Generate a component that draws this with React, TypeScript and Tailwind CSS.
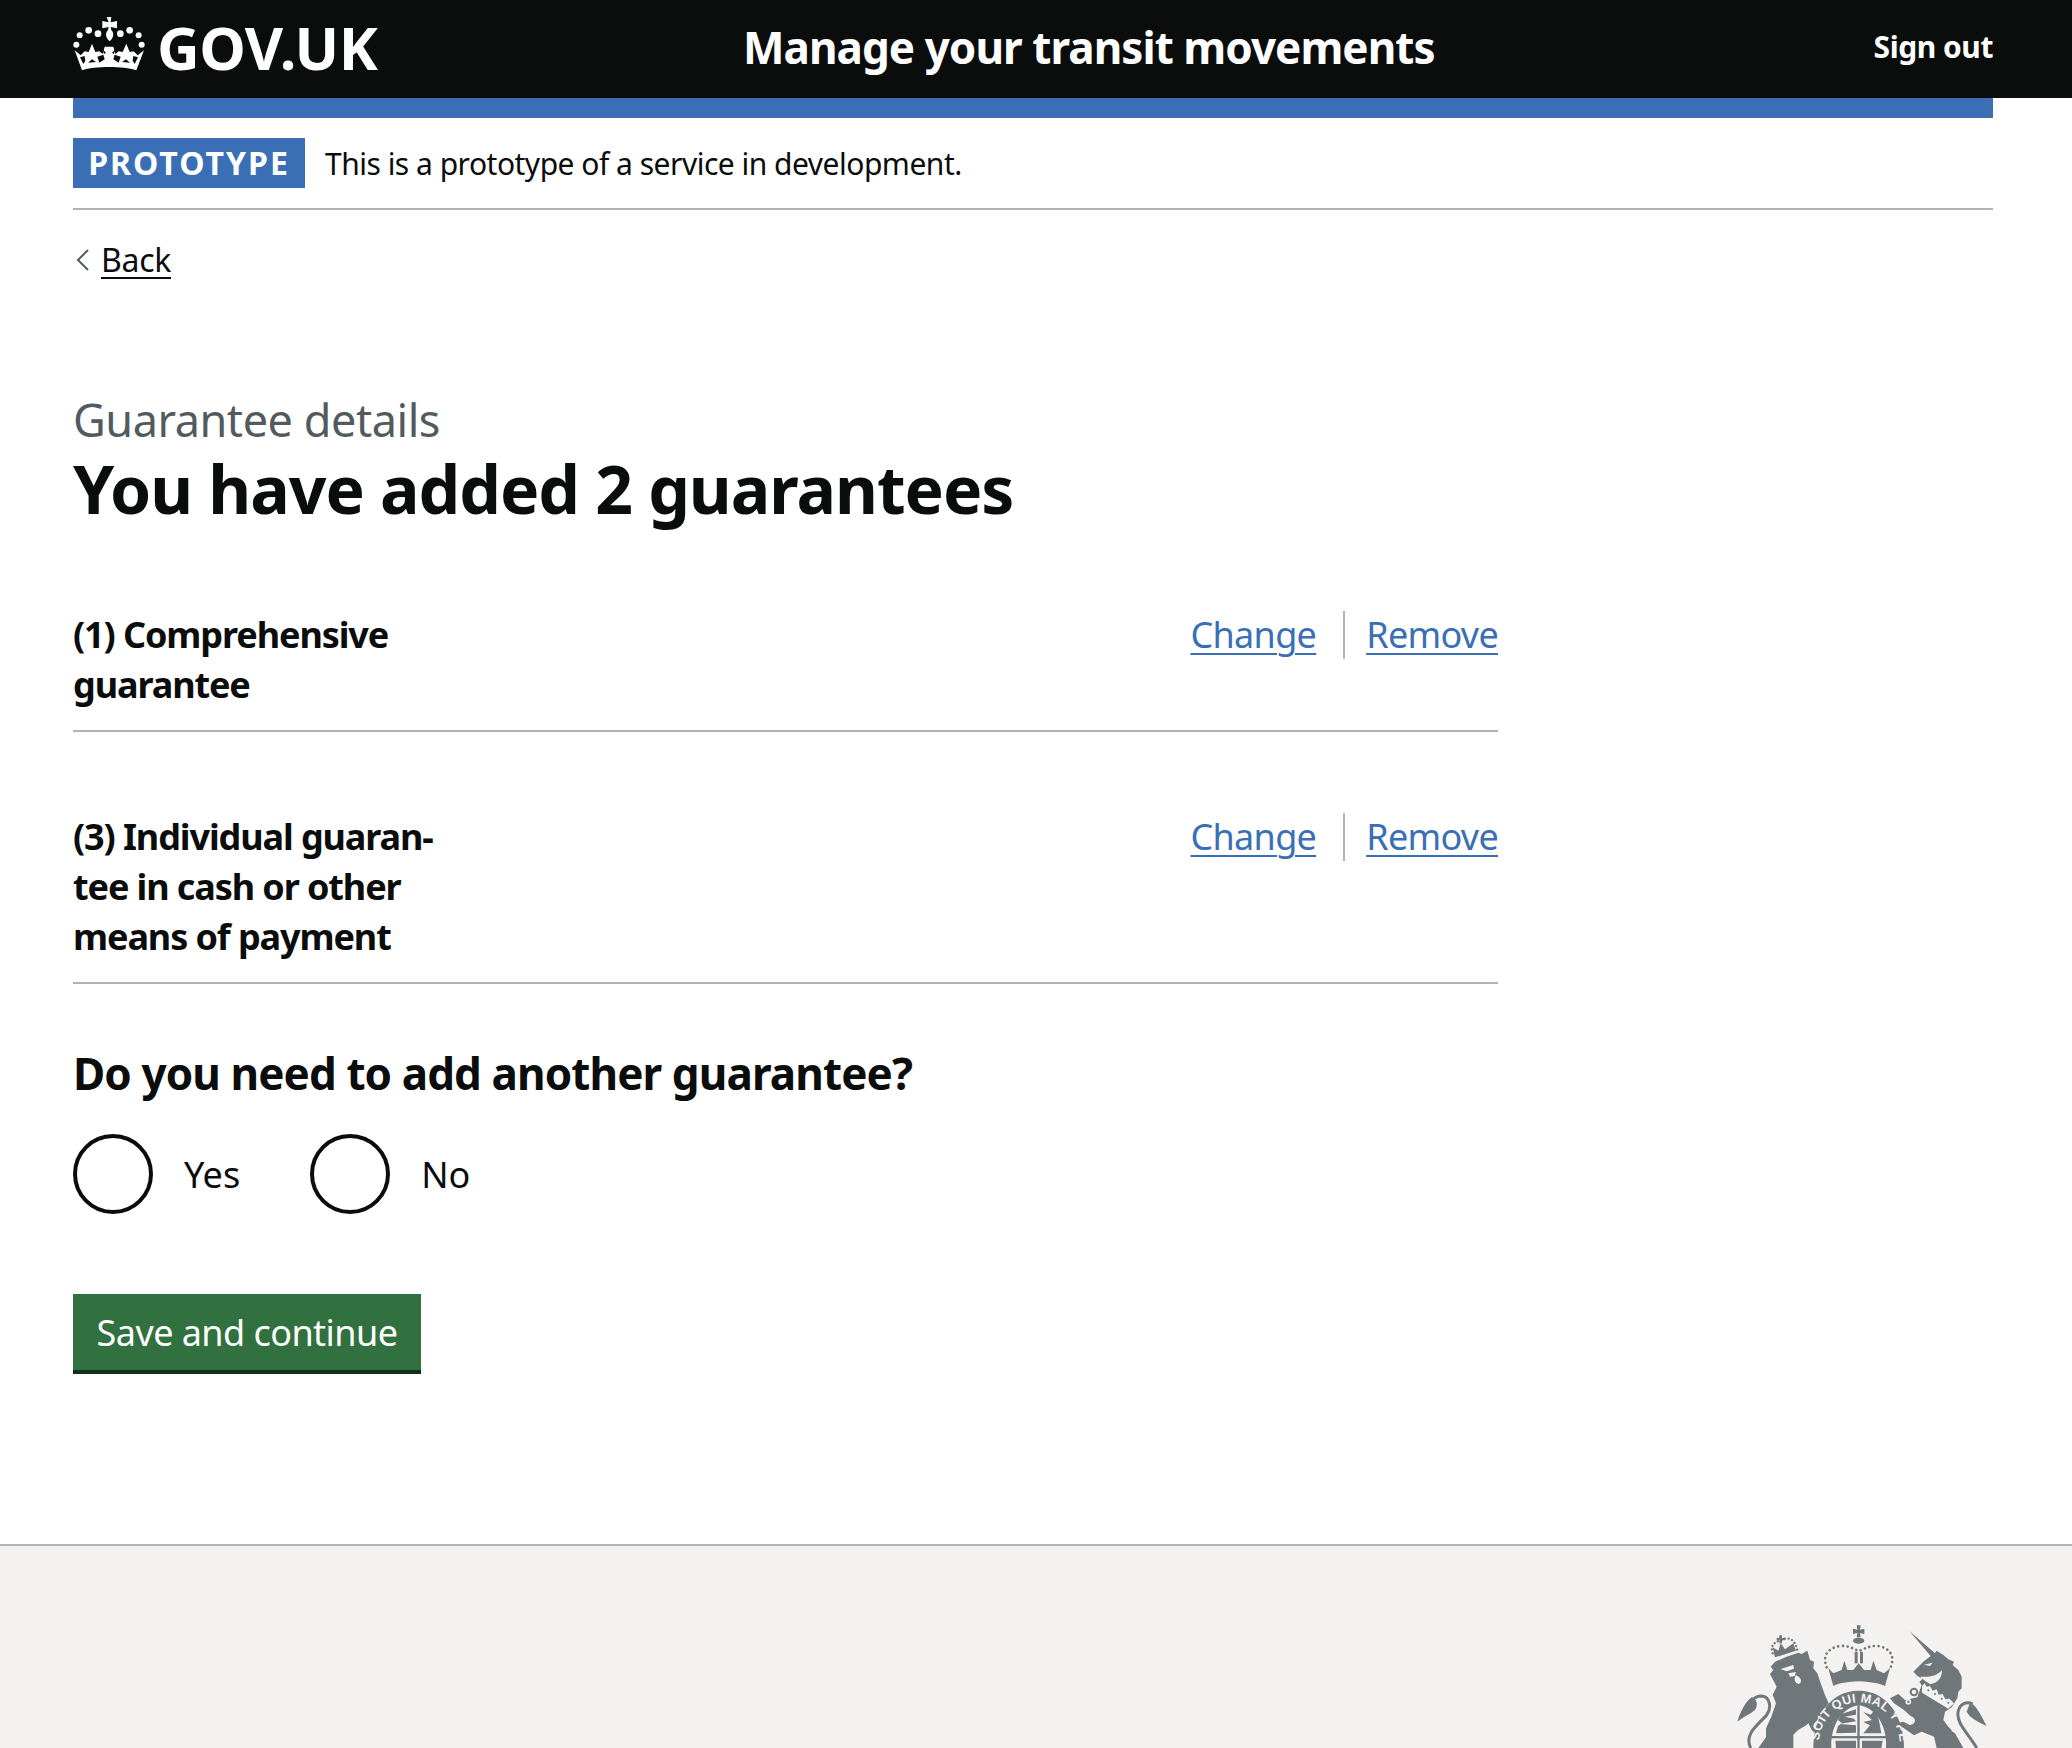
import React from 'react';

const CrownLogo: React.FC = () => (
  <svg viewBox="0 0 252 186" className="w-[84px] h-[62px] shrink-0 -ml-[5px] -mt-[8px]">
    <g fill="#ffffff">
      <path d="M116 15h14l-2 16 19-4v22l-19-4 2 10c10 8 6 24-5 33-11-9-15-25-5-33l2-10-19 4V27l19 4z" />
      <circle cx="35" cy="70" r="9" />
      <circle cx="62" cy="55" r="10" />
      <circle cx="90" cy="65" r="10" />
      <circle cx="157" cy="65" r="10" />
      <circle cx="185" cy="55" r="10" />
      <circle cx="212" cy="70" r="9" />
      <circle cx="25" cy="98" r="9" />
      <circle cx="221" cy="98" r="9" />
      <path d="M20 115 L38 130 L50 118 L62 120 L72 95 L82 120 L94 118 L104 126 L110 104 H136 L142 126 L152 118 L164 120 L175 95 L185 120 L197 118 L209 130 L228 115 L205 175 C165 162 80 162 42 175 Z" />
    </g>
    <g fill="#0b0c0c">
      <path d="M36 136 L50 132 L52 146 L46 156 Z" />
      <path d="M88 134 L106 128 L110 142 L94 152 Z" />
      <path d="M158 134 L140 128 L136 142 L152 152 Z" />
      <path d="M210 136 L196 132 L194 146 L200 156 Z" />
      <path d="M60 152 L84 150 L72 142 Z" />
      <path d="M162 150 L186 152 L174 142 Z" />
      <path d="M104 112 L114 122 L108 126 Z" />
      <path d="M142 112 L132 122 L138 126 Z" />
    </g>
  </svg>
);

const Crest: React.FC = () => (
  <svg viewBox="0 0 810 384" className="w-[270px] h-32 shrink-0">
    {/* lion */}
    <g fill="#6f777b">
      <path d="M122 140 L135 125 L170 110 L205 98 L215 102 L232 92 L240 120 L252 125 L250 145 L262 160 L272 190 L285 225 L296 250 L280 270 L262 300 L250 320 L268 345 L270 384 L85 384 L108 352 L108 325 L124 290 L138 250 L128 225 L140 200 L120 162 L130 150 Z" />
      <path d="M65 232 C45 245 30 280 22 305 C40 290 58 285 75 270 C86 255 80 236 65 232 Z" />
      <path d="M135 112 L128 82 L145 92 L152 70 L165 88 L190 70 L198 92 Z" />
      <path d="M148 46h8v8l8-1v8l-8-1v10h-8V60l-8 1v-8l8 1z" />
    </g>
    <g fill="none" stroke="#6f777b" strokeWidth="9">
      <path d="M62 384 C40 340 90 310 110 285 C126 264 120 230 95 228 C85 228 75 232 70 238" />
    </g>
    <g fill="none" stroke="#6f777b" strokeWidth="7" strokeLinecap="round" strokeDasharray="0.1 11">
      <path d="M128 100 C120 78 132 66 155 60 C172 50 194 54 202 90" />
    </g>
    <g fill="#f3f2f1">
      <path d="M152 147 L190 135 L192 146 L170 154 Z" />
      <path d="M175 160 L198 156 L194 168 L180 170 Z" />
      <path d="M198 166 C214 172 218 188 206 192 C194 190 190 176 198 166 Z" />
      <path d="M190 345 C205 325 225 322 235 310 L245 330 L262 345 L255 360 L265 384 L190 384 Z" />
    </g>

    {/* royal arms */}
    <g transform="translate(240 0)">
      <g fill="#6f777b">
        <path d="M140 16h12l-2 13 13-3v16l-13-3 2 13h-12l2-13-13 3V26l13 3z" />
        <ellipse cx="146" cy="62" rx="17" ry="9" />
        <rect x="134" y="96" width="9" height="34" />
        <rect x="150" y="96" width="9" height="34" />
        <path d="M55 145 L70 160 L95 150 L103 122 L112 150 L130 150 L146 130 L162 150 L182 150 L190 122 L200 150 L222 160 L240 145 L225 198 C190 180 100 180 70 198 Z" />
        <path d="M146 212 C232 212 282 290 282 384 L10 384 C10 290 60 212 146 212 Z" />
      </g>
      <g fill="none" stroke="#6f777b" strokeWidth="8" strokeLinecap="round" strokeDasharray="0.1 14">
        <path d="M50 142 C36 106 54 84 90 78 C112 76 128 84 146 94 C166 84 182 76 205 78 C238 84 256 106 242 142" />
      </g>
      <path fill="#f3f2f1" d="M76 208 C115 178 180 178 222 208 L212 224 C180 200 115 200 86 224 Z" />
      <path fill="#f3f2f1" d="M64 384 C60 316 98 262 146 256 C196 262 232 316 228 384 Z" />
      <g fill="#6f777b">
        <rect x="142" y="256" width="7" height="128" />
        <rect x="64" y="348" width="164" height="7" />
        <path d="M94 282 L138 268 L138 284 L104 290 L132 296 L138 304 L88 312 L138 316 L138 338 L78 340 L84 318 L96 310 L84 300 Z" />
        <path d="M160 276 L182 284 L194 270 L206 296 L214 340 L160 340 L180 316 L160 306 L186 300 Z" />
        <path d="M76 362 L138 362 L138 384 L78 384 Z" />
        <path d="M156 362 L218 362 L214 384 L156 384 Z" />
      </g>
      <defs>
        <path id="mottoArc" d="M28 362 A120 120 0 0 1 268 372" />
      </defs>
      <text fill="#f3f2f1" fontFamily="'Liberation Sans', sans-serif" fontWeight="700" fontSize="38">
        <textPath href="#mottoArc" letterSpacing="1">SOIT QUI MAL Y PE</textPath>
      </text>
    </g>

    {/* unicorn */}
    <g transform="translate(450 0)">
      <g fill="#6f777b">
        <path d="M88 33 L165 100 L170 92 L190 105 L205 118 L222 125 L218 135 L235 150 L245 170 L245 205 L235 215 L232 235 L215 262 L195 275 L190 300 L205 320 L225 340 L250 384 L170 384 L162 350 L125 335 L102 346 L50 310 L70 305 L90 315 L105 300 L72 270 L42 250 L30 235 L55 222 L75 240 L112 232 L125 195 L118 186 L128 176 L112 168 L100 155 L130 125 L152 108 Z" />
        <path d="M270 248 C290 255 305 290 320 318 C295 305 270 295 260 275 Z" />
      </g>
      <g fill="none" stroke="#6f777b" strokeWidth="9">
        <path d="M290 384 C270 345 225 310 235 272 C242 248 262 244 278 252" />
        <circle cx="102" cy="216" r="10" strokeWidth="6" />
      </g>
      <g fill="#f3f2f1">
        <path d="M132 134 L158 128 L150 138 Z" />
        <path d="M120 170 C145 172 170 170 186 150 C186 170 176 190 150 192 C140 186 130 178 120 170 Z" />
        <path d="M126 198 L134 190 L140 200 L150 198 L158 212 L170 208 L176 224 L188 222 L196 238 L208 236 L222 250 L205 266 L126 218 Z" />
      </g>
      <g fill="#6f777b">
        <circle cx="145" cy="211" r="3" />
        <circle cx="165" cy="222" r="3" />
        <circle cx="185" cy="236" r="3" />
        <circle cx="205" cy="248" r="3" />
      </g>
      <g fill="none" stroke="#f3f2f1" strokeWidth="5">
        <circle cx="85" cy="245" r="6" />
        <circle cx="92" cy="302" r="10" />
        <circle cx="225" cy="325" r="10" />
      </g>
    </g>
  </svg>
);

const rows = [
  { id: 1, lines: ['(1) Comprehensive', 'guarantee'] },
  { id: 3, lines: ['(3) Individual guaran-', 'tee in cash or other', 'means of payment'] },
];

const App: React.FC = () => {
  return (
    <div className="h-[1748px] overflow-hidden bg-white text-[#0b0c0c] font-['Noto_Sans',sans-serif] flex flex-col">
      {/* Header */}
      <header className="h-[98px] bg-[#0b0c0c] text-white pl-[73px] pr-[79px] pb-1 flex items-center">
        <div className="w-[670px] flex items-center gap-[5px]">
          <CrownLogo />
          <span className="text-[59px] leading-none font-bold tracking-[-0.5px]">GOV.UK</span>
        </div>
        <div className="flex-1 text-[44px] leading-none font-bold tracking-[-0.95px]">Manage your transit movements</div>
        <div className="text-[30px] leading-none font-bold tracking-[-0.45px]">Sign out</div>
      </header>

      <main className="flex-1 pl-[73px] pr-[79px]">
        <div className="h-5 bg-[#3a6fb5]" />

        {/* Phase banner */}
        <div className="h-[92px] pt-5 border-b-2 border-[#b1b4b6] flex items-start gap-5">
          <span className="h-[50px] w-[232px] bg-[#3a6fb5] text-white text-[32px] font-bold tracking-[2px] flex items-center justify-center">PROTOTYPE</span>
          <span className="h-[50px] flex items-center text-[30px] tracking-[-0.5px]">This is a prototype of a service in development.</span>
        </div>

        {/* Back link */}
        <a href="#back" className="mt-[30px] h-10 flex items-center gap-[11px] text-[32px] tracking-[-0.3px]">
          <svg viewBox="0 0 14 24" className="w-[14px] h-6 ml-[3px] fill-none stroke-[#505a5f] stroke-2"><path d="M12 2L2 12l10 10" /></svg>
          <span className="underline underline-offset-[5px] decoration-2">Back</span>
        </a>

        <div className="mt-[111px] text-[45px] leading-[58px] text-[#505a5f] tracking-[-0.45px]">Guarantee details</div>
        <h1 className="mt-[3px] text-[66px] leading-[72px] font-bold tracking-[-1px]">You have added 2 guarantees</h1>

        {/* Summary list */}
        <div className="w-[1425px] mt-[87px]">
          {rows.map((row) => (
            <div key={row.id} className="flex justify-between border-b-2 border-[#b1b4b6] pb-[19px] mb-[81px] last:mb-0">
              <div className="-mt-px mb-px text-[36px] leading-[50px] font-bold tracking-[-1.1px]">
                {row.lines.map((line) => <div key={line}>{line}</div>)}
              </div>
              <div className="flex items-start text-[36px] leading-[48px] text-[#3a6fb5] tracking-[-0.7px]">
                <a href="#change" className="underline underline-offset-[5px] decoration-2 pr-[27px] border-r-2 border-[#b1b4b6]">Change</a>
                <a href="#remove" className="underline underline-offset-[5px] decoration-2 pl-[21px]">Remove</a>
              </div>
            </div>
          ))}
        </div>

        <h2 className="mt-[61px] text-[44px] leading-[56px] font-bold tracking-[-0.9px]">Do you need to add another guarantee?</h2>

        {/* Radios */}
        <div className="mt-[33px] flex gap-[70px]">
          {['Yes', 'No'].map((label) => (
            <label key={label} className="flex items-center gap-[31px] text-[36px] leading-none">
              <span className="w-20 h-20 rounded-full border-4 border-[#0b0c0c]" />
              <span className="min-w-[55px] pt-[2px]">{label}</span>
            </label>
          ))}
        </div>

        <button className="mt-[80px] w-[348px] h-20 pt-[2px] bg-[#31703f] border-b-4 border-[#10301b] text-white text-[36px] flex items-center justify-center tracking-[-0.55px]">
          Save and continue
        </button>
      </main>

      {/* Footer */}
      <footer className="h-[204px] bg-[#f3f2f1] border-t-2 border-[#b1b4b6] pt-[74px] pr-[72px] flex justify-end items-start">
        <Crest />
      </footer>
    </div>
  );
};

export default App;
